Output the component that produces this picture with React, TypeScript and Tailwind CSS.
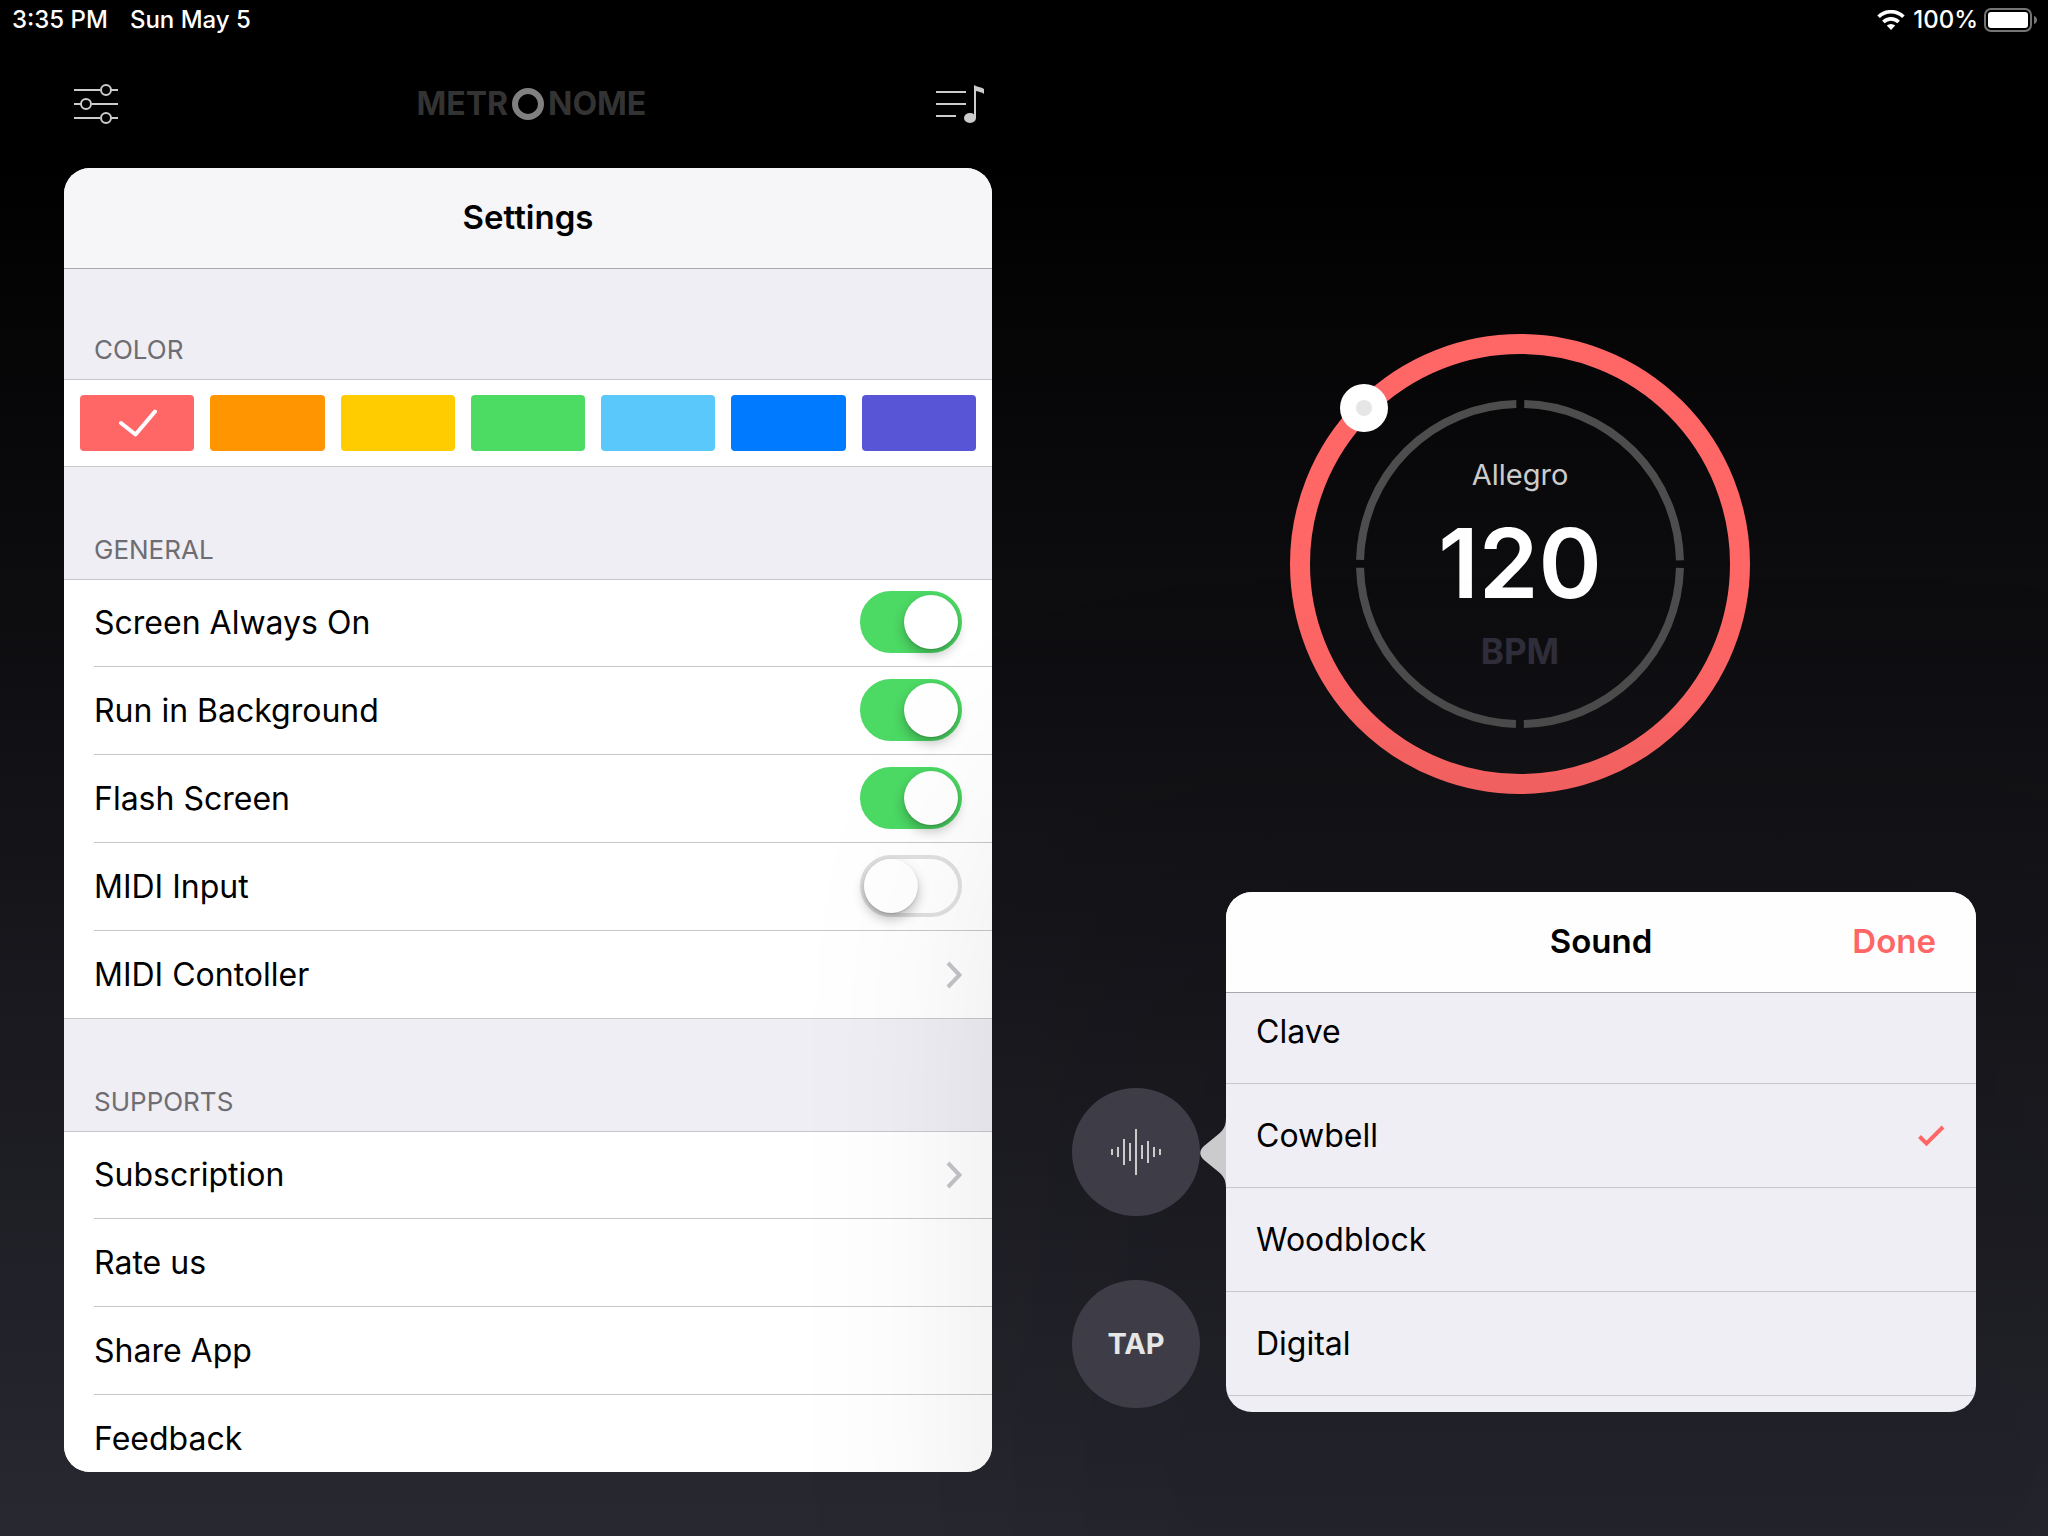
import { useState } from 'react';

const colors = [
    { name: 'Red', className: 'bg-[#ff6666]' },
    { name: 'Orange', className: 'bg-[#ff9500]' },
    { name: 'Yellow', className: 'bg-[#ffcc00]' },
    { name: 'Green', className: 'bg-[#4cdc64]' },
    { name: 'Light blue', className: 'bg-[#5ac8fa]' },
    { name: 'Blue', className: 'bg-[#007aff]' },
    { name: 'Purple', className: 'bg-[#5856d6]' },
];

const switches = ['Screen Always On', 'Run in Background', 'Flash Screen', 'MIDI Input'];

const supports = [
    { label: 'Subscription', chevron: true },
    { label: 'Rate us', chevron: false },
    { label: 'Share App', chevron: false },
    { label: 'Feedback', chevron: false },
];

const sounds = ['Clave', 'Cowbell', 'Woodblock', 'Digital'];

const waveBars = [6, 10, 26, 18, 46, 14, 22, 10, 6];

const StatusBar = () => (
    <div className="flex h-10 shrink-0 items-center pl-3 pr-2.5 text-2xl font-medium text-white">
        <span>3:35 PM</span>
        <span className="ml-[22px]">Sun May 5</span>
        <svg className="ml-auto" width="28" height="20" viewBox="0 0 28 20" fill="none">
            <path d="M14 20 L9.8 15.6 A6 6 0 0 1 18.2 15.6 Z" fill="white" />
            <path d="M6.4 12 A10.8 10.8 0 0 1 21.6 12" stroke="white" strokeWidth="3.6" />
            <path d="M1.6 6.8 A17.6 17.6 0 0 1 26.4 6.8" stroke="white" strokeWidth="3.6" />
        </svg>
        <span className="ml-2">100%</span>
        <svg className="ml-1.5" width="54" height="24" viewBox="0 0 54 24" fill="none">
            <rect x="1" y="1" width="46" height="22" rx="6" stroke="#757575" strokeWidth="2" />
            <rect x="4" y="4" width="40" height="16" rx="3" fill="white" />
            <path d="M50 8 C54 9 54 15 50 16 Z" fill="#757575" />
        </svg>
    </div>
);

const Chevron = () => (
    <svg width="16" height="28" viewBox="0 0 16 28" fill="none">
        <path d="M2 2 L13.5 14 L2 26" stroke="#c4c4c9" strokeWidth="4" />
    </svg>
);

const SectionTitle = ({ children }: { children: string }) => (
    <h2 className="flex h-28 items-end pb-3 pl-[30px] text-[26px] leading-[34px] text-[#6d6d72]">{children}</h2>
);

const Settings = () => {
    const [color, setColor] = useState('Red');
    const [enabled, setEnabled] = useState<string[]>(switches.slice(0, 3));

    const toggle = (label: string) => {
        setEnabled(enabled.includes(label) ? enabled.filter((s) => s !== label) : [...enabled, label]);
    };

    return (
        <section className="min-h-0 flex-1 overflow-hidden rounded-[26px] bg-[#efeef4] text-black">
            <h1 className="flex h-[101px] items-center justify-center border-b border-[#a7a7ac] bg-[#f6f6f8] text-[33px] font-semibold">
                Settings
            </h1>

            <div className="-mt-0.5">
                <SectionTitle>COLOR</SectionTitle>
            </div>
            <div className="grid grid-cols-7 gap-4 border-y border-[#c8c7cc] bg-white px-4 py-[15px]">
                {colors.map((c) => (
                    <button
                        key={c.name}
                        aria-label={c.name}
                        aria-pressed={color === c.name}
                        onClick={() => setColor(c.name)}
                        className={`flex h-14 items-center justify-center rounded ${c.className}`}
                    >
                        {color === c.name && (
                            <svg width="40" height="28" viewBox="0 0 40 28" fill="none">
                                <path d="M4 14 L18.5 25.5 L38 2.5" stroke="white" strokeWidth="4" strokeLinecap="round" strokeLinejoin="round" />
                            </svg>
                        )}
                    </button>
                ))}
            </div>

            <SectionTitle>GENERAL</SectionTitle>
            <div className="border-y border-[#c8c7cc] bg-white pl-[30px]">
                {switches.map((label) => (
                    <label key={label} className="flex h-[88px] items-center border-b border-[#c8c7cc] pr-[30px] text-[32px] first:h-[87px]">
                        {label}
                        <input
                            type="checkbox"
                            role="switch"
                            checked={enabled.includes(label)}
                            onChange={() => toggle(label)}
                            className="mb-0.5 ml-auto h-[62px] w-[102px] appearance-none rounded-full border-4 border-[#e0e0e0] before:block before:size-[54px] before:rounded-full before:bg-white before:shadow-[0_6px_12px_rgba(0,0,0,0.25),0_1px_2px_rgba(0,0,0,0.15)] checked:border-[#4cd964] checked:bg-[#4cd964] checked:before:ml-10"
                        />
                    </label>
                ))}
                <button className="flex h-[87px] w-full items-center justify-between pr-[30px] text-[32px]">
                    MIDI Contoller
                    <Chevron />
                </button>
            </div>

            <SectionTitle>SUPPORTS</SectionTitle>
            <div className="border-t border-[#c8c7cc] bg-white pl-[30px]">
                {supports.map((item) => (
                    <button
                        key={item.label}
                        className="flex h-[88px] w-full items-center justify-between border-b border-[#c8c7cc] pr-[30px] text-[32px] first:h-[87px]"
                    >
                        {item.label}
                        {item.chevron && <Chevron />}
                    </button>
                ))}
            </div>
        </section>
    );
};

const Dial = () => (
    <div className="grid place-items-center self-center">
        <svg className="[grid-area:1/1]" width="460" height="460" viewBox="-230 -230 460 460" fill="none">
            <circle r="220" stroke="#ff6666" strokeWidth="20" />
            <circle r="160" stroke="#4d4d4d" strokeWidth="8" strokeDasharray="243.33 8" strokeDashoffset="-4" />
            <circle cx="-156" cy="-156" r="24" fill="white" />
            <circle cx="-156" cy="-156" r="8" fill="#e6e6e6" />
        </svg>
        <div className="flex flex-col items-center gap-5 pb-0.5 [grid-area:1/1]">
            <p className="text-[29px] leading-10 text-[#cccccc]">Allegro</p>
            <p className="text-[96px] leading-[96px] font-semibold text-white">120</p>
            <p className="text-[35px] leading-10 font-bold text-[#2f2e3a]">BPM</p>
        </div>
    </div>
);

const SoundPopover = () => {
    const [sound, setSound] = useState('Cowbell');

    return (
        <section className="h-[520px] min-w-0 flex-1 overflow-hidden rounded-[26px] bg-[#efeef4] text-black shadow-[0_100px_240px_200px_rgba(0,0,0,0.12)]">
            <header className="grid h-[101px] grid-cols-[1fr_auto_1fr] items-center border-b border-[#a7a7ac] bg-[#fefefe] px-10 text-[33px] font-semibold">
                <h2 className="col-start-2">Sound</h2>
                <button className="justify-self-end text-[#ff6666]">Done</button>
            </header>
            <ul className="-mt-[13px]">
                {sounds.map((s) => (
                    <li key={s}>
                        <button
                            onClick={() => setSound(s)}
                            className="flex h-[104px] w-full items-center justify-between border-b border-[#c8c7cc] px-[30px] text-[32px]"
                        >
                            {s}
                            {sound === s && (
                                <svg width="28" height="22" viewBox="0 0 28 22" fill="none">
                                    <path d="M1.5 11.5 L8.5 18.5 L25 2" stroke="#ff6666" strokeWidth="4" />
                                </svg>
                            )}
                        </button>
                    </li>
                ))}
            </ul>
        </section>
    );
};

const App = () => (
    <div className="flex h-screen flex-col overflow-hidden bg-linear-to-b/srgb from-black from-10% to-[#282831] font-['Inter',sans-serif]">
        <StatusBar />
        <main className="grid min-h-0 flex-1 grid-cols-[31fr_33fr]">
            <div className="flex min-h-0 flex-col pb-16 pl-16">
                <header className="flex h-32 shrink-0 items-center px-2">
                    <button aria-label="Settings">
                        <svg width="48" height="40" viewBox="0 0 48 40" fill="none" stroke="#cccccc" strokeWidth="2">
                            <path d="M2 6 H28 M39 6 H46 M2 20 H9 M20 20 H46 M2 34 H28 M39 34 H46" />
                            <circle cx="34" cy="6" r="5" />
                            <circle cx="14" cy="20" r="5" />
                            <circle cx="34" cy="34" r="5" />
                        </svg>
                    </button>
                    <div className="flex flex-1 items-center gap-1 text-[32px] font-bold text-[#333333]">
                        <span className="flex-1 text-right">METR</span>
                        <svg width="32" height="32" viewBox="0 0 32 32" fill="none">
                            <circle cx="16" cy="16" r="13" stroke="#808080" strokeWidth="6" />
                        </svg>
                        <span className="flex-1">NOME</span>
                    </div>
                    <button aria-label="Playlist">
                        <svg width="48" height="40" viewBox="0 0 48 40" fill="#cccccc">
                            <path d="M0 7 H30 V9 H0 Z M0 19 H30 V21 H0 Z M0 31 H20 V33 H0 Z" />
                            <ellipse cx="34" cy="34" rx="6" ry="5" />
                            <path d="M38 1 C41 3 45 3 48 5 V10 C46 8 43 8 40 7 V34 H38 Z" />
                        </svg>
                    </button>
                </header>
                <Settings />
            </div>

            <div className="flex min-h-0 flex-col pt-[294px]">
                <Dial />
                <div className="mt-[98px] flex items-start pl-20 pr-[72px]">
                    <div className="relative flex flex-col gap-16 pt-[196px]">
                        <button aria-label="Sound" className="flex size-32 items-center justify-center rounded-full bg-[#3e3d47]">
                            <svg width="50" height="46" viewBox="0 0 50 46" fill="#cccccc">
                                {waveBars.map((h, i) => (
                                    <rect key={i} x={i * 6} y={23 - h / 2} width="2" height={h} />
                                ))}
                            </svg>
                        </button>
                        <button className="size-32 rounded-full bg-[#3e3d47] text-[29px] font-bold text-[#e6e6e6]">TAP</button>
                    </div>
                    <svg className="relative mt-[226px] shrink-0" width="26" height="70" viewBox="0 0 26 70">
                        <path d="M26 0 C26 11 21 14 15 19 L4 28 C-1 33 -1 37 4 42 L15 51 C21 56 26 59 26 70 Z" fill="#cbcbce" />
                    </svg>
                    <SoundPopover />
                </div>
            </div>
        </main>
    </div>
);

export default App;
